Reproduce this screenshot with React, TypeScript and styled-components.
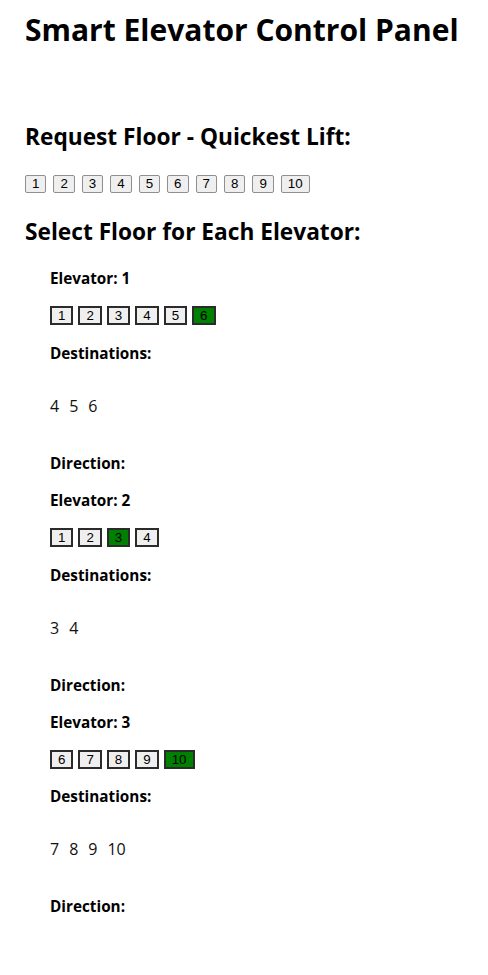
import React from "react";
import styled, { createGlobalStyle } from "styled-components";

const Global = createGlobalStyle`
  html, body { margin: 0; padding: 0; background: #fff; }
  body { font-family: "Open Sans", "Noto Sans", sans-serif; color: #000; }
`;

const Page = styled.div`
  padding: 8px 25px 40px 25px;
`;

const Title = styled.h1`
  margin: 0;
  font-size: 30px;
  line-height: 43px;
  font-weight: 700;
  white-space: nowrap;
`;

const SectionTitle = styled.h2<{ $top: number }>`
  margin: ${(p) => p.$top}px 0 0 0;
  font-size: 22.7px;
  line-height: 32px;
  font-weight: 700;
  white-space: nowrap;
`;

const RequestRow = styled.div`
  display: flex;
  gap: 7px;
  margin-top: 22px;
`;

const RequestButton = styled.button`
  font-family: "Liberation Sans", Arial, sans-serif;
  font-size: 13.33px;
  line-height: 16px;
  padding: 0 6px;
  border: 1px solid #8f8f8f;
  border-radius: 2px;
  background: #efefef;
  color: #000;
`;

const ElevatorList = styled.div`
  margin-top: 20px;
  padding-left: 25px;
`;

const Elevator = styled.div`
  margin-bottom: 16px;
`;

const Label = styled.div<{ $top?: number }>`
  margin-top: ${(p) => p.$top ?? 0}px;
  font-size: 15.3px;
  line-height: 21px;
  font-weight: 700;
`;

const FloorRow = styled.div`
  display: flex;
  gap: 5px;
  margin-top: 17px;
`;

const FloorButton = styled.button<{ $active: boolean }>`
  font-family: "Liberation Sans", Arial, sans-serif;
  font-size: 13.33px;
  line-height: 15.33px;
  padding: 0 6px;
  border: 2px solid #2b2b2b;
  border-radius: 0;
  background: ${(p) => (p.$active ? "#008000" : "#efefef")};
  color: #000;
`;

const Destinations = styled.div`
  display: flex;
  gap: 10px;
  margin-top: 32px;
  font-size: 16px;
  line-height: 21px;
  color: #111;
`;

const elevators = [
  { id: 1, floors: [1, 2, 3, 4, 5, 6], active: 6, dest: [4, 5, 6] },
  { id: 2, floors: [1, 2, 3, 4], active: 3, dest: [3, 4] },
  { id: 3, floors: [6, 7, 8, 9, 10], active: 10, dest: [7, 8, 9, 10] },
];

export default function App() {
  return (
    <Page>
      <Global />
      <Title>Smart Elevator Control Panel</Title>
      <SectionTitle $top={70}>Request Floor - Quickest Lift:</SectionTitle>
      <RequestRow>
        {[1, 2, 3, 4, 5, 6, 7, 8, 9, 10].map((f) => (
          <RequestButton key={f}>{f}</RequestButton>
        ))}
      </RequestRow>
      <SectionTitle $top={23}>Select Floor for Each Elevator:</SectionTitle>
      <ElevatorList>
        {elevators.map((e) => (
          <Elevator key={e.id}>
            <Label>Elevator: {e.id}</Label>
            <FloorRow>
              {e.floors.map((f) => (
                <FloorButton key={f} $active={f === e.active}>
                  {f}
                </FloorButton>
              ))}
            </FloorRow>
            <Label $top={17.5}>Destinations:</Label>
            <Destinations>
              {e.dest.map((d) => (
                <span key={d}>{d}</span>
              ))}
            </Destinations>
            <Label $top={36}>Direction:</Label>
          </Elevator>
        ))}
      </ElevatorList>
    </Page>
  );
}
